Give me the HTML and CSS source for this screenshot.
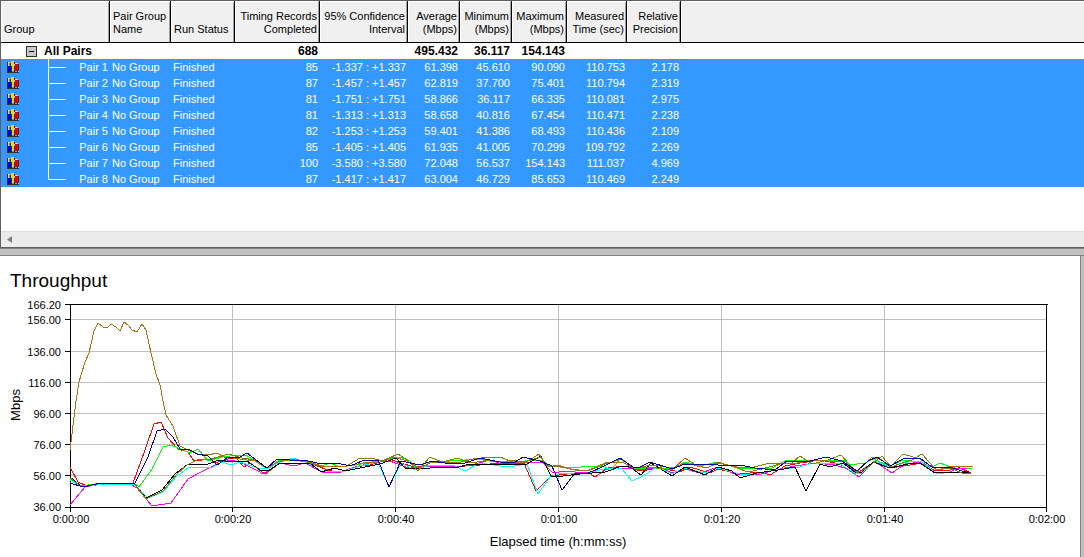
FILE: index.html
```html
<!DOCTYPE html>
<html lang="en">
<head>
<meta charset="utf-8">
<title>Throughput</title>
<link rel="stylesheet" href="styles.css">
</head>
<body>
<svg class="defs" aria-hidden="true">
  <symbol id="bars" viewBox="0 0 12 12" shape-rendering="crispEdges">
    <path fill="#303030" d="M0 1h1v11h-1zM0 11h12v1h-12zM3 2h2v9h-2zM7 1h1v10h-1zM10 3h2v8h-2z"/>
    <path fill="#d8d0b8" d="M1 1h2v1h-2zM1 2h1v3h-1zM4 0h3v1h-3zM4 1h1v4h-1zM8 2h3v1h-3zM7 3h1v2h-1zM11 10h1v1h-1z"/>
    <path fill="#0000e0" d="M1 5h3v6h-3z"/>
    <path fill="#f0d000" d="M5 1h2v9h-2z"/>
    <path fill="#e80000" d="M8 3h3v7h-3z"/>
  </symbol>
  <symbol id="branch" viewBox="0 0 18 16"><path fill="#fff" d="M0 0h1v16h-1zM1 8h17v1h-17z"/></symbol>
  <symbol id="branch-end" viewBox="0 0 18 16"><path fill="#fff" d="M0 0h1v9h-1zM1 8h17v1h-17z"/></symbol>
</svg>

<section class="results">
  <div class="list">
    <table class="grid">
      <colgroup>
        <col class="c-group"><col class="c-name"><col class="c-status"><col class="c-records"><col class="c-conf">
        <col class="c-num"><col class="c-num"><col class="c-max"><col class="c-time"><col class="c-prec"><col>
      </colgroup>
      <thead>
        <tr>
          <th class="left">Group</th><th class="left">Pair Group<br>Name</th><th class="left">Run Status</th>
          <th>Timing Records<br>Completed</th><th>95% Confidence<br>Interval</th><th>Average<br>(Mbps)</th>
          <th>Minimum<br>(Mbps)</th><th>Maximum<br>(Mbps)</th><th>Measured<br>Time (sec)</th><th>Relative<br>Precision</th><th class="filler"></th>
        </tr>
      </thead>
      <tbody>
        <tr class="total">
          <td><div class="node"><button class="toggle" type="button" aria-label="Collapse All Pairs"><svg class="minus" viewBox="0 0 11 11" shape-rendering="crispEdges"><path fill="#303030" d="M0 0h11v11h-11z"/><path fill="#c8c8c8" d="M1 1h9v9h-9z"/><path fill="#000" d="M3 5h5v1h-5z"/></svg></button>All Pairs</div></td>
          <td></td><td></td><td>688</td><td></td><td>495.432</td><td>36.117</td><td>154.143</td><td></td><td></td><td></td>
        </tr>
        <tr class="pair"><td><div class="node"><svg class="icon"><use href="#bars"/></svg><svg class="tree"><use href="#branch"/></svg><span class="label">Pair 1</span></div></td><td class="left">No Group</td><td class="left">Finished</td><td>85</td><td>-1.337 : +1.337</td><td>61.398</td><td>45.610</td><td>90.090</td><td>110.753</td><td>2.178</td><td></td></tr>
        <tr class="pair"><td><div class="node"><svg class="icon"><use href="#bars"/></svg><svg class="tree"><use href="#branch"/></svg><span class="label">Pair 2</span></div></td><td class="left">No Group</td><td class="left">Finished</td><td>87</td><td>-1.457 : +1.457</td><td>62.819</td><td>37.700</td><td>75.401</td><td>110.794</td><td>2.319</td><td></td></tr>
        <tr class="pair"><td><div class="node"><svg class="icon"><use href="#bars"/></svg><svg class="tree"><use href="#branch"/></svg><span class="label">Pair 3</span></div></td><td class="left">No Group</td><td class="left">Finished</td><td>81</td><td>-1.751 : +1.751</td><td>58.866</td><td>36.117</td><td>66.335</td><td>110.081</td><td>2.975</td><td></td></tr>
        <tr class="pair"><td><div class="node"><svg class="icon"><use href="#bars"/></svg><svg class="tree"><use href="#branch"/></svg><span class="label">Pair 4</span></div></td><td class="left">No Group</td><td class="left">Finished</td><td>81</td><td>-1.313 : +1.313</td><td>58.658</td><td>40.816</td><td>67.454</td><td>110.471</td><td>2.238</td><td></td></tr>
        <tr class="pair"><td><div class="node"><svg class="icon"><use href="#bars"/></svg><svg class="tree"><use href="#branch"/></svg><span class="label">Pair 5</span></div></td><td class="left">No Group</td><td class="left">Finished</td><td>82</td><td>-1.253 : +1.253</td><td>59.401</td><td>41.386</td><td>68.493</td><td>110.436</td><td>2.109</td><td></td></tr>
        <tr class="pair"><td><div class="node"><svg class="icon"><use href="#bars"/></svg><svg class="tree"><use href="#branch"/></svg><span class="label">Pair 6</span></div></td><td class="left">No Group</td><td class="left">Finished</td><td>85</td><td>-1.405 : +1.405</td><td>61.935</td><td>41.005</td><td>70.299</td><td>109.792</td><td>2.269</td><td></td></tr>
        <tr class="pair"><td><div class="node"><svg class="icon"><use href="#bars"/></svg><svg class="tree"><use href="#branch"/></svg><span class="label">Pair 7</span></div></td><td class="left">No Group</td><td class="left">Finished</td><td>100</td><td>-3.580 : +3.580</td><td>72.048</td><td>56.537</td><td>154.143</td><td>111.037</td><td>4.969</td><td></td></tr>
        <tr class="pair"><td><div class="node"><svg class="icon"><use href="#bars"/></svg><svg class="tree"><use href="#branch-end"/></svg><span class="label">Pair 8</span></div></td><td class="left">No Group</td><td class="left">Finished</td><td>87</td><td>-1.417 : +1.417</td><td>63.004</td><td>46.729</td><td>85.653</td><td>110.469</td><td>2.249</td><td></td></tr>
      </tbody>
    </table>
  </div>
  <div class="scrollbar"><button class="arrow" type="button" aria-label="Scroll left"><svg class="arrow-icon" viewBox="0 0 10 14"><path fill="#808080" d="M10 0v14L0 7z"/></svg></button></div>
</section>
<div class="splitter"></div>
<section class="chart">
  <svg class="plot" viewBox="0 256 1080 301" role="img" aria-label="Throughput chart">
    <text class="title" x="10" y="287">Throughput</text>
    <path class="gridline" d="M70 319.500H1047M70 351.500H1047M70 382.500H1047M70 413.500H1047M70 444.500H1047M70 475.500H1047M232.500 305V507M395.500 305V507M558.500 305V507M721.500 305V507M884.500 305V507"/>
    <path class="axis" d="M65 304.500H1048M65 507.500H1047M70.500 304V512M1046.500 304V512M65 319.500H70M65 351.500H70M65 382.500H70M65 413.500H70M65 444.500H70M65 475.500H70M232.500 508V512M395.500 508V512M558.500 508V512M721.500 508V512M884.500 508V512"/>
    <g class="tick end">
      <text x="61" y="309">166.20</text><text x="61" y="324">156.00</text><text x="61" y="356">136.00</text><text x="61" y="387">116.00</text>
      <text x="61" y="418">96.00</text><text x="61" y="449">76.00</text><text x="61" y="480">56.00</text><text x="61" y="511">36.00</text>
    </g>
    <g class="tick mid">
      <text x="71" y="523">0:00:00</text><text x="233" y="523">0:00:20</text><text x="396" y="523">0:00:40</text><text x="559" y="523">0:01:00</text>
      <text x="722" y="523">0:01:20</text><text x="885" y="523">0:01:40</text><text x="1047" y="523">0:02:00</text>
    </g>
    <text class="caption" x="558" y="546">Elapsed time (h:mm:ss)</text>
    <text class="caption" transform="translate(20 405) rotate(-90)">Mbps</text>
    <g class="series">
      <polyline stroke="#ff0000" points="70,467 78,482 87,486 101,483 133,483 145,450 154,424 161,422 168,438 178,449 188,452 194,461 210,459 215,463 228,459 236,458 244,467 250,463 265,474 280,463 310,463 325,469 338,473 355,467 370,465 390,459 400,463 415,467 430,465 450,467 480,465 500,463 524,463 536,491 551,476 575,473 588,472 595,477 608,468 625,466 640,471 660,468 680,472 690,467 710,473 718,469 740,474 760,472 770,475 785,466 800,463 820,460 840,464 855,474 865,468 875,461 890,468 910,465 922,463 935,471 950,470 956,466 971,473"/>
      <polyline stroke="#00ff00" points="70,479 82,486 101,483 134,483 139,487 152,469 163,447 171,445 183,450 190,453 198,449 208,461 222,457 230,456 246,455 267,469 278,461 290,460 310,462 322,466 329,463 340,467 355,465 372,462 385,460 400,457 410,461 418,470 432,461 450,461 480,459 495,462 525,461 540,460 550,466 570,468 592,466 604,466 610,471 620,459 635,468 660,468 675,468 685,462 700,466 718,462 740,469 750,468 770,469 785,461 815,460 843,460 850,465 865,463 873,459 890,466 903,460 920,462 932,467 940,463 950,467 960,469 972,468"/>
      <polyline stroke="#ff00ff" points="70,505 85,487 101,484 130,484 137,488 152,506 171,503 188,479 203,471 217,464 230,460 240,462 258,471 263,474 280,463 294,466 305,463 322,472 337,473 352,468 370,463 390,461 408,468 430,466 455,467 475,464 490,460 505,465 520,462 542,462 553,473 565,471 585,473 610,468 630,468 640,470 660,467 672,473 685,469 700,473 718,467 735,474 757,475 775,470 795,466 815,463 835,465 848,469 859,477 874,461 892,473 905,464 922,462 935,472 950,472 958,468 967,469"/>
      <polyline stroke="#00ffff" points="70,480 82,487 101,484 134,484 148,498 163,492 177,476 188,468 213,467 222,462 231,465 240,462 258,468 267,469 278,463 293,458 308,463 322,472 345,471 360,466 378,462 389,487 401,463 415,470 430,465 455,466 465,471 480,463 507,467 527,464 538,494 550,477 562,473 585,474 608,468 622,469 632,481 643,476 657,467 672,474 685,468 705,473 718,468 740,474 755,474 775,470 800,467 812,463 840,464 855,473 862,473 875,461 890,467 908,462 920,461 937,474 950,472 969,472"/>
      <polyline stroke="#000000" points="70,477 82,487 101,483 134,483 146,498 162,490 175,474 187,465 208,464 219,460 232,462 247,461 260,470 268,471 280,463 310,463 321,472 335,468 345,471 360,468 380,464 396,458 405,468 420,469 440,467 455,468 470,464 500,464 525,465 541,456 551,476 563,476 580,474 605,472 622,466 630,467 641,475 651,463 672,476 685,467 705,475 718,467 732,471 740,478 757,473 778,470 795,467 806,491 820,464 830,467 843,463 855,472 862,472 873,462 890,468 908,464 920,463 935,473 955,472 969,472"/>
      <polyline stroke="#808000" points="70,478 82,487 101,483 134,483 146,499 163,491 177,474 187,465 197,460 211,459 229,454 242,458 255,460 267,468 278,462 294,459 312,463 322,466 333,466 345,467 360,458 372,458 382,461 398,454 407,460 418,471 430,457 442,462 458,458 470,463 490,460 505,463 510,460 525,462 540,457 548,466 558,466 575,470 590,470 605,464 622,459 633,468 648,467 672,470 685,458 697,466 707,468 718,462 737,468 748,472 762,469 780,464 792,463 800,456 812,464 828,460 841,455 857,473 867,468 882,456 891,467 905,462 912,460 922,454 936,470 950,468 962,473 971,473"/>
      <polyline stroke="#a47314" points="70,450 76,401 79,382 85,362 89,353 94,331 98,323 103,327 107,328 111,324 116,327 120,331 124,322 128,325 132,330 137,332 142,324 146,330 151,353 156,374 160,385 163,401 166,415 173,426 180,446 188,450 198,454 208,455 217,453 224,457 233,458 247,460 255,461 267,468 278,462 288,459 307,462 320,466 347,466 363,463 380,462 394,457 407,461 420,468 432,462 457,463 473,459 490,457 500,457 510,461 525,463 539,454 548,467 558,465 570,469 587,471 605,463 622,462 633,468 653,465 673,468 685,463 707,468 718,463 737,467 750,468 770,463 797,463 813,460 843,462 857,472 872,457 882,460 890,467 903,454 920,459 937,470 952,466 973,467"/>
      <polyline stroke="#000099" points="70,483 83,487 101,483 135,483 148,457 157,431 165,429 173,437 180,449 190,450 197,454 208,456 217,465 228,457 240,457 247,453 267,468 277,459 290,460 308,461 322,464 337,463 350,466 362,461 378,460 389,487 401,461 420,465 432,461 445,463 465,463 480,458 500,462 515,462 523,457 540,461 552,466 562,490 575,473 588,473 600,468 620,458 633,467 640,467 650,462 672,469 685,464 718,465 740,465 755,468 775,470 787,461 797,462 810,461 826,457 842,461 857,471 868,461 877,457 890,466 905,458 920,458 933,468 950,467 962,471 969,471"/>
    </g>
  </svg>
  <div class="edge"></div>
</section>
</body>
</html>
```
FILE: styles.css
```css
* { box-sizing: border-box; }
body {
  margin: 0;
  min-height: 100vh;
  display: flex;
  flex-direction: column;
  background: #fff;
  color: #000;
  font: 11px/13px "Liberation Sans", Arial, sans-serif;
}
.defs { display: none; }
.results {
  border-top: 1px solid #606060;
  border-left: 1px solid #606060;
  border-bottom: 1px solid #606060;
}
.list { min-height: 230px; overflow: hidden; }
.grid { width: 100%; table-layout: fixed; border-collapse: separate; border-spacing: 0; }
.c-group { width: 109px; }
.c-name { width: 61px; }
.c-status { width: 64px; }
.c-records { width: 85px; }
.c-conf { width: 88px; }
.c-num { width: 52px; }
.c-max { width: 55px; }
.c-time { width: 60px; }
.c-prec { width: 54px; }
th {
  height: 42px;
  padding: 0 2px 6px 3px;
  vertical-align: bottom;
  text-align: right;
  font-weight: normal;
  white-space: nowrap;
  background: #f0f0f0;
  border-right: 1px solid #000;
  border-bottom: 1px solid #000;
  box-shadow: inset 1px 1px #fff, inset -1px 0 #a0a0a0;
}
th.filler { border-right: 0; box-shadow: inset 1px 1px #fff; }
td { height: 16px; padding: 0 2px; line-height: 16px; text-align: right; white-space: nowrap; }
th.left, td.left { text-align: left; }
.total { font-size: 12px; font-weight: bold; }
.pair { background: #3399ff; color: #fff; }
.node { display: flex; align-items: center; height: 16px; }
.toggle { border: 0; margin: 0 7px 0 23px; padding: 0; background: none; height: 11px; }
.minus { display: block; width: 11px; height: 11px; }
.icon { width: 12px; height: 12px; margin-left: 4px; }
.tree { width: 18px; height: 16px; margin-left: 29px; }
.label { margin-left: auto; }
.scrollbar {
  display: flex;
  align-items: center;
  height: 16px;
  padding-left: 6px;
  background: #ebebeb;
  border-top: 1px solid #e0e0e0;
}
.arrow { border: 0; padding: 0; background: none; }
.arrow-icon { display: block; width: 5px; height: 7px; }
.splitter { height: 8px; background: #c0c0c0; border-top: 1px solid #808080; border-bottom: 1px solid #808080; }
.chart { flex: 1; display: flex; align-items: stretch; }
.plot { display: block; flex: 1; min-width: 0; align-self: flex-start; }
.edge { width: 4px; background: #c0c0c0; border-left: 1px solid #808080; }
.tick { font-size: 11px; }
.title { font-size: 19px; }
.caption { font-size: 13px; text-anchor: middle; }
.end { text-anchor: end; }
.mid { text-anchor: middle; }
.gridline { stroke: #c0c0c0; fill: none; shape-rendering: crispEdges; }
.axis { stroke: #000; fill: none; shape-rendering: crispEdges; }
.series { fill: none; shape-rendering: crispEdges; }
```
